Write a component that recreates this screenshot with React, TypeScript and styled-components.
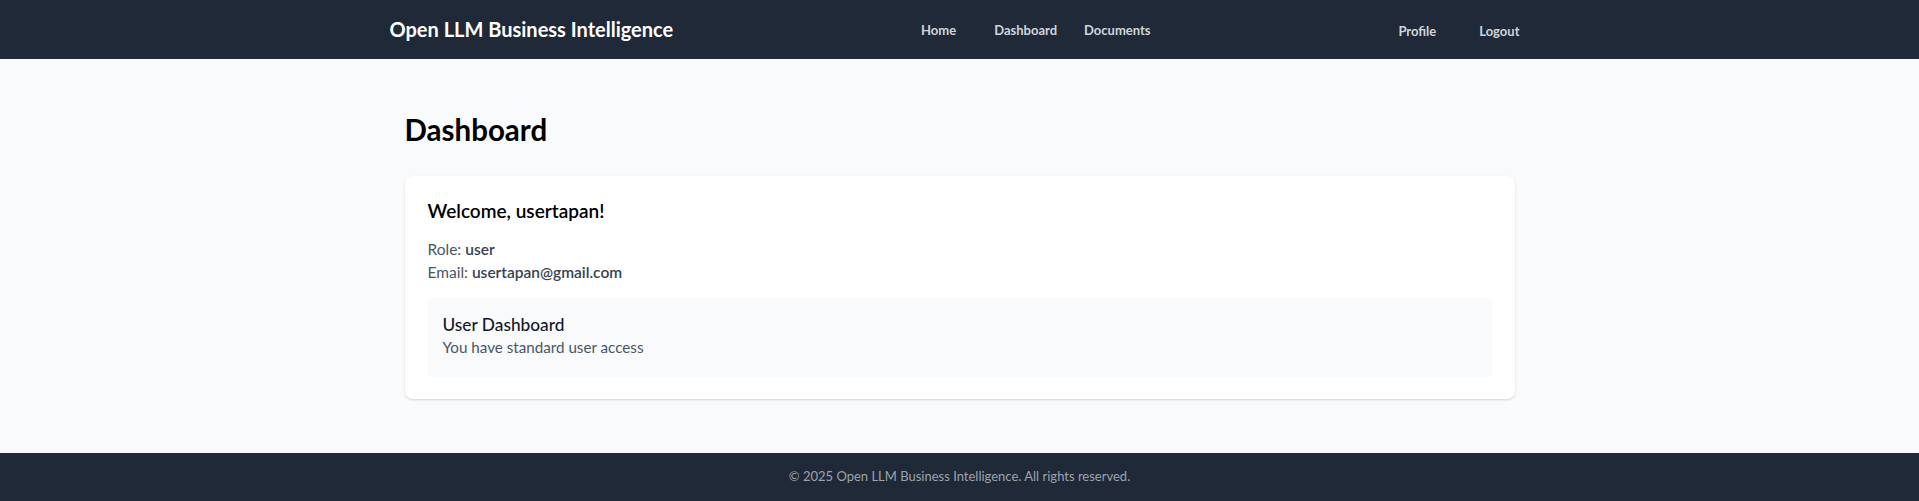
import React from 'react'
import styled, { createGlobalStyle } from 'styled-components'

const GlobalStyle = createGlobalStyle`
	* {
		box-sizing: border-box;
	}
	html, body {
		margin: 0;
		background: #f9fafb;
		font-family: Lato, 'Open Sans', sans-serif;
		color: #111827;
	}
`

const Header = () => (
	<StyledNavbar>
		<StyledNavInner>
			<StyledBrand>Open LLM Business Intelligence</StyledBrand>
			<StyledNavLinks>
				<StyledNavLink>Home</StyledNavLink>
				<StyledNavLink $gap={38}>Dashboard</StyledNavLink>
				<StyledNavLink $gap={27}>Documents</StyledNavLink>
			</StyledNavLinks>
			<StyledNavLinks $end>
				<StyledNavLink>Profile</StyledNavLink>
				<StyledNavLink $gap={43}>Logout</StyledNavLink>
			</StyledNavLinks>
		</StyledNavInner>
	</StyledNavbar>
)

const App: React.FC = () => {
	return (
		<StyledPage>
			<GlobalStyle />
			<Header />
			<StyledMain>
				<StyledTitle>Dashboard</StyledTitle>
				<StyledCard>
					<StyledWelcome>Welcome, usertapan!</StyledWelcome>
					<StyledInfoList>
						<StyledInfo>
							Role: <strong>user</strong>
						</StyledInfo>
						<StyledInfo>
							Email: <strong>usertapan@gmail.com</strong>
						</StyledInfo>
					</StyledInfoList>
					<StyledPanel>
						<StyledPanelTitle>User Dashboard</StyledPanelTitle>
						<StyledPanelText>You have standard user access</StyledPanelText>
					</StyledPanel>
				</StyledCard>
			</StyledMain>
			<StyledFooter>
				© 2025 Open LLM Business Intelligence. All rights reserved.
			</StyledFooter>
		</StyledPage>
	)
}

const StyledPage = styled.div`
	height: 501px;
	overflow: hidden;
	display: flex;
	flex-direction: column;
`

const StyledNavbar = styled.nav`
	background: #1f2937;
	height: 59px;
	flex-shrink: 0;
`

const StyledNavInner = styled.div`
	max-width: 1140px;
	height: 100%;
	margin: 0 auto;
	display: flex;
	align-items: center;
	justify-content: space-between;
`

const StyledBrand = styled.div`
	color: #ffffff;
	font-size: 20px;
	font-weight: 700;
	padding-bottom: 1px;
`

const StyledNavLinks = styled.div<{ $end?: boolean }>`
	display: flex;
	align-items: center;
	padding-right: ${(props) => (props.$end ? 10 : 0)}px;
	padding-top: ${(props) => (props.$end ? 2 : 0)}px;
`

const StyledNavLink = styled.a<{ $gap?: number }>`
	color: #d1d5db;
	font-size: 13px;
	font-weight: 700;
	margin-left: ${(props) => props.$gap ?? 0}px;
	cursor: pointer;
	&:hover {
		color: #ffffff;
	}
`

const StyledMain = styled.main`
	flex: 1;
	width: 100%;
	max-width: 1140px;
	margin: 0 auto;
	padding: 52px 15px 0;
`

const StyledTitle = styled.h1`
	margin: 0 0 27px;
	font-size: 29.5px;
	font-weight: 700;
	color: #000000;
	line-height: 38px;
`

const StyledCard = styled.div`
	background: #ffffff;
	border-radius: 8px;
	box-shadow: 0 1px 3px rgba(0, 0, 0, 0.1), 0 1px 2px rgba(0, 0, 0, 0.06);
	padding: 21px 23px 22px;
`

const StyledWelcome = styled.h2`
	margin: 0 0 13px;
	font-size: 19px;
	font-weight: 600;
	color: #000000;
	line-height: 28px;
`

const StyledInfoList = styled.div`
	margin-bottom: 14px;
`

const StyledInfo = styled.p`
	margin: 0;
	font-size: 15.5px;
	line-height: 23px;
	color: #4b5563;
	strong {
		font-weight: 600;
		color: #374151;
	}
`

const StyledPanel = styled.div`
	background: #f9fafb;
	border-radius: 4px;
	padding: 15px 15px 18px;
`

const StyledPanelTitle = styled.h3`
	margin: 0;
	font-size: 17.3px;
	font-weight: 500;
	color: #111827;
	line-height: 23px;
`

const StyledPanelText = styled.p`
	margin: 0;
	font-size: 15.2px;
	line-height: 23px;
	color: #4b5563;
`

const StyledFooter = styled.footer`
	background: #1f2937;
	height: 48px;
	flex-shrink: 0;
	display: flex;
	align-items: center;
	justify-content: center;
	padding-bottom: 3px;
	color: #9ca3af;
	font-size: 13px;
`

export default App
